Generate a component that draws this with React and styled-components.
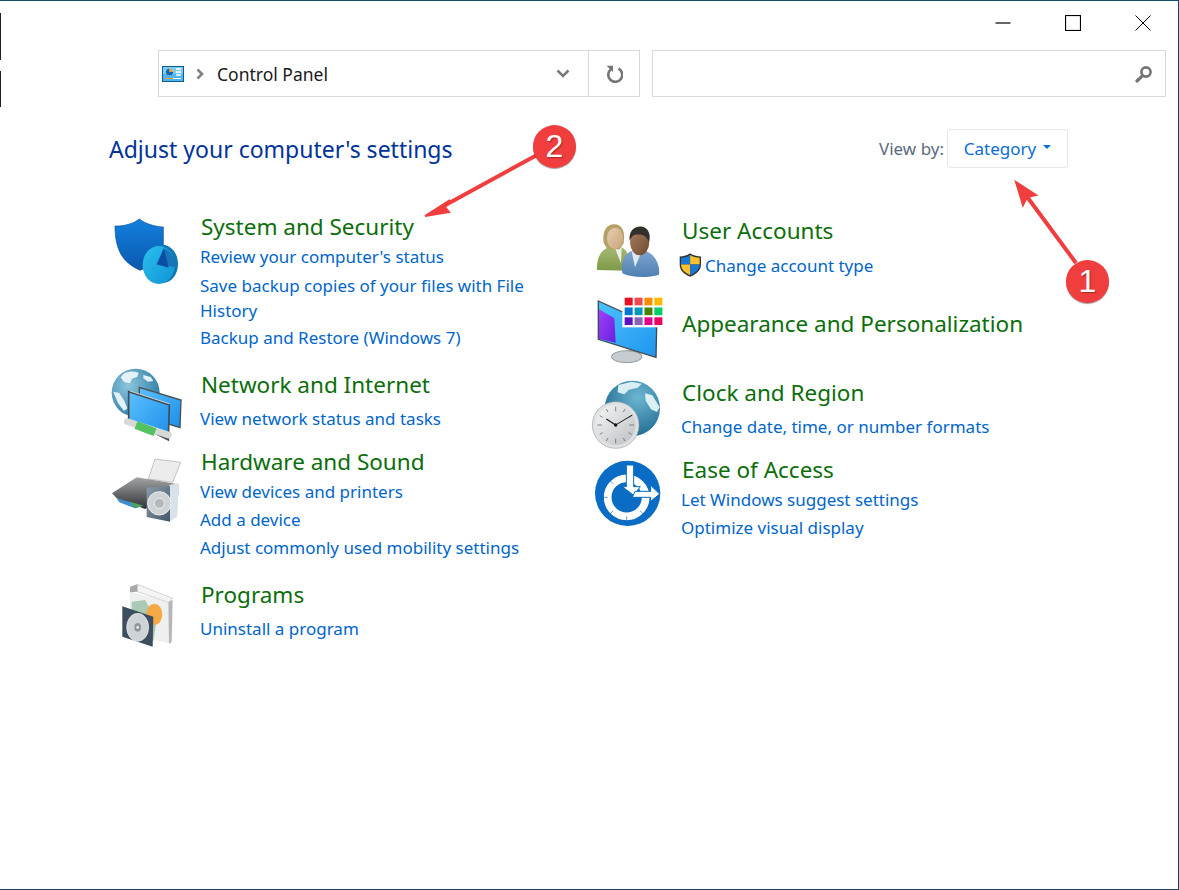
import React from 'react';
import styled, {createGlobalStyle} from 'styled-components';

const GlobalStyle = createGlobalStyle`
html, body {
  margin: 0;
  padding: 0;
  background: #fff;
}
body {
  font-family: "Noto Sans", "Open Sans", sans-serif;
}
`;

const Page = styled.div`
position: relative;
box-sizing: border-box;
width: 1179px;
height: 890px;
background: #fff;
border-top: 1px solid #14506e;
border-right: 1px solid #1a3f6b;
border-bottom: 1px solid #1a3f6b;
overflow: hidden;
`;

const EdgeMark = styled.div`
position: absolute;
left: 0;
top: ${({$top}) => $top}px;
width: 1px;
height: ${({$h}) => $h}px;
background: #222;
`;

const TitleBar = styled.div`
display: flex;
justify-content: flex-end;
height: 49px;
`;

const WinButton = styled.div`
display: flex;
align-items: center;
justify-content: center;
width: 70px;
height: 43px;
`;

const AddressRow = styled.div`
display: flex;
gap: 12px;
padding: 0 12px 0 158px;
`;

const AddressBox = styled.div`
box-sizing: border-box;
display: flex;
align-items: center;
width: 482px;
height: 47px;
border: 1px solid #d9d9d9;
`;

const Crumb = styled.div`
flex: 1;
display: flex;
align-items: center;
padding-left: 3px;
font-size: 17.5px;
color: #1a1a1a;
`;

const CrumbSep = styled.svg`
margin: 0 13px 0 12px;
`;

const DropZone = styled.div`
display: flex;
align-items: center;
justify-content: center;
width: 50px;
`;

const RefreshZone = styled.div`
display: flex;
align-items: center;
justify-content: center;
width: 50px;
height: 100%;
border-left: 1px solid #d9d9d9;
`;

const SearchBox = styled.div`
box-sizing: border-box;
flex: 1;
display: flex;
align-items: center;
justify-content: flex-end;
height: 47px;
padding-right: 12px;
border: 1px solid #d9d9d9;
`;

const HeaderRow = styled.div`
display: flex;
align-items: center;
justify-content: space-between;
height: 39px;
margin-top: 32px;
padding: 0 110px 0 109px;
`;

const PageTitle = styled.h1`
margin: 0;
font-size: 23px;
font-weight: 400;
color: #003399;
`;

const ViewBy = styled.div`
display: flex;
align-items: center;
gap: 3px;
font-size: 17px;
color: #5b6b7d;
`;

const ViewButton = styled.div`
box-sizing: border-box;
display: flex;
align-items: center;
justify-content: center;
gap: 7px;
width: 121px;
height: 39px;
border: 1px solid #e8e8e8;
border-radius: 3px;
color: #0a6dd9;
`;

const Caret = styled.span`
width: 0;
height: 0;
margin-top: -3px;
border-left: 4px solid transparent;
border-right: 4px solid transparent;
border-top: 4px solid #0a6dd9;
`;

const Columns = styled.div`
display: grid;
grid-template-columns: 481px 1fr;
margin-top: 44px;
padding-left: 109px;
`;

const Column = styled.div`
display: flex;
flex-direction: column;
padding-top: ${({$top}) => $top || 0}px;
`;

const Item = styled.div`
display: grid;
grid-template-columns: 92px 1fr;
margin-top: ${({$gap}) => $gap || 0}px;
`;

const IconArt = styled.svg`
display: block;
width: 76px;
height: 76px;
margin-top: ${({$top}) => $top || 0}px;
margin-bottom: -76px;
overflow: visible;
`;

const Heading = styled.div`
height: 30px;
margin-bottom: ${({$lone}) => ($lone ? 5 : 1)}px;
font-size: 22.5px;
line-height: 30px;
color: #0b6e0b;
white-space: nowrap;
`;

const TaskLink = styled.div`
margin-left: -1px;
max-width: ${({$wrapped}) => ($wrapped ? '330px' : 'none')};
padding: ${({$wrapped}) => ($wrapped ? '1.5px 0' : 0)};
font-size: 17px;
line-height: ${({$wrapped}) => ($wrapped ? 25 : 28)}px;
color: #0066cc;
`;

const ShieldRow = styled.div`
display: flex;
align-items: center;
gap: 3px;
margin-left: -3px;
height: 28px;
font-size: 17px;
color: #0066cc;
`;

const Badge = styled.div`
position: absolute;
left: ${({$x}) => $x}px;
top: ${({$y}) => $y}px;
display: flex;
align-items: center;
justify-content: center;
width: 43px;
height: 43px;
border-radius: 50%;
background: #f03e3e;
box-shadow: 0 1px 1px rgba(90, 60, 60, 0.55);
font-family: "Liberation Sans", Arial, sans-serif;
font-size: 32px;
color: #fff;
text-shadow: 1px 1px 1px rgba(90, 20, 20, 0.5);
`;

const ArrowLayer = styled.svg`
position: absolute;
left: 0;
top: -1px;
width: 1179px;
height: 890px;
pointer-events: none;
`;

const MiniPanelIcon = () => (
    <svg width="22" height="16" viewBox="0 0 22 16">
        <rect x="0.5" y="0.5" width="21" height="15" fill="#4fb3ee" stroke="#0d5c96"/>
        <rect x="1" y="1" width="20" height="7" fill="#7ccbf5"/>
        <circle cx="7.5" cy="6" r="3.6" fill="#fff"/>
        <path d="M7.5 6V2.4A3.6 3.6 0 0 1 11.1 6Z" fill="#f0a020"/>
        <path d="M7.5 6h3.6A3.6 3.6 0 1 1 7.5 2.4Z" fill="#1467b5"/>
        <path d="M14 3h5M14 6h5M14 9h5" stroke="#fff" strokeWidth="1.4"/>
        <path d="M3 12.5h8" stroke="#f0a020" strokeWidth="1"/>
        <path d="M11 12.5h8" stroke="#fff" strokeWidth="1"/>
    </svg>
);

const SmallShield = () => (
    <svg width="23" height="24" viewBox="283 123 66 71">
        <path d="M315 124c9 6 20 9 32 9v24c0 17-13 29-32 36-19-7-31-19-31-36v-24c12 0 22-3 31-9Z" fill="#333"/>
        <path d="M315 129v28h-27v-20c10 0 19-3 27-8Z" fill="#1878d4"/>
        <path d="M315 129c8 5 17 8 28 8v20h-28Z" fill="#fbc02d"/>
        <path d="M315 157v31c-15-6-27-16-27-31Z" fill="#fbc02d"/>
        <path d="M315 157h28c0 15-12 25-28 31Z" fill="#1878d4"/>
    </svg>
);

const SecurityIcon = () => (
    <IconArt viewBox="27 21 228 228">
        <defs>
            <linearGradient id="sh1" x1="0" y1="0" x2="0" y2="1">
                <stop offset="0" stopColor="#1280de"/>
                <stop offset="1" stopColor="#0a58ad"/>
            </linearGradient>
            <linearGradient id="pie1" x1="0" y1="0" x2="1" y2="1">
                <stop offset="0" stopColor="#2cc0ee"/>
                <stop offset="1" stopColor="#0f93d4"/>
            </linearGradient>
        </defs>
        <path d="M45 63C72 64 100 56 118 42C136 56 164 65 190 66V125C190 160 155 182 120 196C82 178 45 152 45 63Z" fill="url(#sh1)" stroke="#0a4f9c" strokeWidth="2"/>
        <ellipse cx="186" cy="177" rx="48" ry="58" fill="#0e78b6"/>
        <ellipse cx="176" cy="180" rx="48" ry="57" fill="url(#pie1)"/>
        <path d="M172 180L190 130C208 135 222 150 228 186Z" fill="#1774b6"/>
        <path d="M170 178L192 130L206 188Z" fill="#0a4fa6"/>
    </IconArt>
);

const NetworkIcon = () => (
    <IconArt $top={-5} viewBox="27 480 228 228">
        <defs>
            <radialGradient id="gl1" cx="0.35" cy="0.35" r="0.8">
                <stop offset="0" stopColor="#8cc6dd"/>
                <stop offset="1" stopColor="#22729e"/>
            </radialGradient>
            <linearGradient id="sc1" x1="0" y1="0" x2="1" y2="1">
                <stop offset="0" stopColor="#5cc0ff"/>
                <stop offset="1" stopColor="#1a8ee8"/>
            </linearGradient>
        </defs>
        <circle cx="107" cy="563" r="72" fill="url(#gl1)"/>
        <path d="M72 505c18-8 30-6 44-2l-4 12-16 6-6 14-18-4-10-14ZM130 510l22 6 8 12-16 2-14-10ZM40 560l18 4 14 22 10 24-10 8-18-24Z" fill="#e4f1f6"/>
        <path d="M118 547L243 585L240 668L118 630Z" fill="url(#sc1)" stroke="#4a4f55" strokeWidth="4"/>
        <path d="M86 560L208 600L205 705L86 645Z" fill="url(#sc1)" stroke="#474c52" strokeWidth="5"/>
        <path d="M90 558L208 596" stroke="#c8ccd0" strokeWidth="3"/>
        <path d="M82 650L205 690" stroke="#d6d9d6" strokeWidth="20" strokeLinecap="round"/>
        <path d="M108 660L165 682" stroke="#52c25e" strokeWidth="24"/>
    </IconArt>
);

const PrinterIcon = () => (
    <IconArt $top={3} viewBox="27 15 228 228">
        <defs>
            <linearGradient id="pr1" x1="0" y1="0" x2="0" y2="1">
                <stop offset="0" stopColor="#a2a4a6"/>
                <stop offset="1" stopColor="#2f3133"/>
            </linearGradient>
            <linearGradient id="pr2" x1="0" y1="0" x2="1" y2="1">
                <stop offset="0" stopColor="#8a9bab"/>
                <stop offset="1" stopColor="#465868"/>
            </linearGradient>
        </defs>
        <path d="M165 42L242 52L218 112L145 102Z" fill="#ececec" stroke="#a9a9a9" strokeWidth="2"/>
        <path d="M36 145L110 97L235 118L235 150L135 192L50 160Z" fill="url(#pr1)"/>
        <path d="M50 160L130 182L105 190L58 172Z" fill="#3a8fd0"/>
        <path d="M90 170L130 182L105 190Z" fill="#50a05a"/>
        <path d="M208 120L236 114L232 214L210 230Z" fill="#d8e2ea"/>
        <path d="M140 128L210 124L210 230L140 216Z" fill="url(#pr2)"/>
        <circle cx="178" cy="175" r="35" fill="#cfd3d6" stroke="#eef0f1" strokeWidth="3"/>
        <circle cx="178" cy="175" r="15" fill="#b4b8bb" stroke="#fff" strokeWidth="2"/>
    </IconArt>
);

const ProgramsIcon = () => (
    <IconArt viewBox="27 405 228 228">
        <path d="M90 440L205 470L210 595L90 570Z" fill="#eeefef"/>
        <path d="M205 470L218 465L215 590L207 597Z" fill="#b4b6b8"/>
        <path d="M112 418L218 460L205 472L112 440Z" fill="#f4f4f4" stroke="#c2c2c2" strokeWidth="2"/>
        <path d="M90 425L112 418L112 440L90 442Z" fill="#a8aaac"/>
        <path d="M95 470L135 465L170 525L160 590L95 500Z" fill="#abc9b4"/>
        <ellipse cx="163" cy="508" rx="24" ry="32" fill="#f4a944"/>
        <path d="M67 484L160 515L158 605L67 575Z" fill="#3c4d5e"/>
        <ellipse cx="113" cy="547" rx="33" ry="42" fill="#cfd3d6" stroke="#eef0f1" strokeWidth="2"/>
        <ellipse cx="113" cy="547" rx="10" ry="13" fill="#8d949a"/>
        <ellipse cx="113" cy="547" rx="4" ry="5" fill="#e7e9ea"/>
    </IconArt>
);

const UsersIcon = () => (
    <IconArt viewBox="15 18 228 228">
        <defs>
            <linearGradient id="us1" x1="0" y1="0" x2="0" y2="1">
                <stop offset="0" stopColor="#a7b872"/>
                <stop offset="1" stopColor="#7c9a48"/>
            </linearGradient>
            <linearGradient id="us2" x1="0" y1="0" x2="0" y2="1">
                <stop offset="0" stopColor="#7ea5cf"/>
                <stop offset="1" stopColor="#4f7fb2"/>
            </linearGradient>
            <linearGradient id="us3" x1="0" y1="0" x2="1" y2="1">
                <stop offset="0" stopColor="#e8ceae"/>
                <stop offset="1" stopColor="#c9a57e"/>
            </linearGradient>
            <linearGradient id="us4" x1="0" y1="0" x2="1" y2="1">
                <stop offset="0" stopColor="#a88062"/>
                <stop offset="1" stopColor="#6f4a30"/>
            </linearGradient>
        </defs>
        <path d="M36 180C34 140 50 118 72 112L110 112C130 122 138 150 130 182Z" fill="url(#us1)"/>
        <path d="M90 115L110 110L108 160Z" fill="#eef2ea"/>
        <path d="M56 100C50 60 68 42 88 43C110 44 122 60 116 100L104 118L68 118Z" fill="#b4a166"/>
        <ellipse cx="90" cy="85" rx="24" ry="32" fill="url(#us3)"/>
        <path d="M112 190C106 150 122 128 142 122L180 122C206 130 226 160 222 194C190 204 140 204 112 190Z" fill="url(#us2)"/>
        <path d="M140 124L170 124L150 172Z" fill="#dfe8ef"/>
        <ellipse cx="164" cy="96" rx="29" ry="40" fill="url(#us4)"/>
        <path d="M134 92C130 60 152 46 172 50C192 54 198 76 192 96C184 76 170 72 150 74C142 76 138 84 134 92Z" fill="#33302c"/>
    </IconArt>
);

const tiles = [
    '#e81123', '#f04a50', '#ff8c00', '#ffb900',
    '#0078d7', '#0099bc', '#498205', '#00cc6a',
    '#5c0fc7', '#8764b8', '#e3008c', '#ea005e',
];

const AppearanceIcon = () => (
    <IconArt $top={-17} viewBox="15 246 228 228">
        <defs>
            <linearGradient id="ap1" x1="0" y1="0" x2="1" y2="1">
                <stop offset="0" stopColor="#4cc2ff"/>
                <stop offset="1" stopColor="#1f95ee"/>
            </linearGradient>
            <linearGradient id="ap2" x1="0" y1="0" x2="1" y2="1">
                <stop offset="0" stopColor="#a040ff"/>
                <stop offset="1" stopColor="#6a1fd8"/>
            </linearGradient>
        </defs>
        <path d="M130 418L168 430L168 445L130 438Z" fill="#b8bec2"/>
        <ellipse cx="125" cy="440" rx="46" ry="18" fill="#c6ccd0" stroke="#6f767b" strokeWidth="2"/>
        <path d="M40 273L215 352L213 442L40 388Z" fill="url(#ap1)" stroke="#3e4a52" strokeWidth="4"/>
        <path d="M42 298L88 325L92 398L42 386Z" fill="url(#ap2)"/>
        <rect x="112" y="258" width="125" height="94" fill="#fff"/>
        {tiles.map((color, i) => (
            <rect key={color} x={119 + (i % 4) * 29.7} y={263 + Math.floor(i / 4) * 29.5} width="24" height="23" fill={color}/>
        ))}
    </IconArt>
);

const ClockIcon = () => (
    <IconArt viewBox="15 24 228 228">
        <defs>
            <radialGradient id="cl1" cx="0.6" cy="0.3" r="0.85">
                <stop offset="0" stopColor="#6db6d2"/>
                <stop offset="1" stopColor="#125d86"/>
            </radialGradient>
            <linearGradient id="cl2" x1="0" y1="0" x2="1" y2="1">
                <stop offset="0" stopColor="#f6f6f6"/>
                <stop offset="1" stopColor="#bcbfc2"/>
            </linearGradient>
        </defs>
        <circle cx="142" cy="115" r="83" fill="url(#cl1)"/>
        <path d="M100 45l40-10 30 6-12 12-26 6-14 14-20-6ZM180 70l22 6 22 36-8 14-18-8-16-26Z" fill="#d9eef5"/>
        <circle cx="92" cy="165" r="70" fill="#dfe2e4" stroke="#9ea4a8" strokeWidth="2"/>
        <circle cx="92" cy="165" r="60" fill="url(#cl2)"/>
        <path d="M92 110v14M92 206v14M37 165h14M133 165h14M64 117l5 9M120 117l-5 9M64 213l5-9M120 213l-5-9M44 137l9 5M140 137l-9 5M44 193l9-5M140 193l-9-5" stroke="#555" strokeWidth="2"/>
        <path d="M92 165L64 147" stroke="#1c1c1c" strokeWidth="4"/>
        <path d="M92 165L142 135" stroke="#1c1c1c" strokeWidth="3"/>
        <circle cx="92" cy="165" r="5" fill="#111"/>
    </IconArt>
);

const EaseIcon = () => (
    <IconArt $top={3} viewBox="15 264 228 228">
        <circle cx="128" cy="370" r="98" fill="#0a6cc4"/>
        <circle cx="125" cy="382" r="57" fill="none" stroke="#fff" strokeWidth="23"/>
        <path d="M125 325v-16M68 382h-24M85 342l-14-14M125 439v24M85 422l-16 16M165 422l16 16" stroke="#0a6cc4" strokeWidth="2"/>
        <path d="M124 285H146V350H166L146 376L112 350H124Z" fill="#fff" stroke="#0a6cc4" strokeWidth="3"/>
        <path d="M150 364H197V346L224 372L197 394V382H142Z" fill="#fff" stroke="#0a6cc4" strokeWidth="3"/>
    </IconArt>
);

function App() {
    return (
        <>
            <GlobalStyle/>
            <Page>
                <EdgeMark $top={12} $h={47}/>
                <EdgeMark $top={70} $h={36}/>
                <TitleBar>
                    <WinButton>
                        <svg width="16" height="16" viewBox="0 0 16 16"><path d="M0.5 8h15" stroke="#000" strokeWidth="1.2"/></svg>
                    </WinButton>
                    <WinButton>
                        <svg width="16" height="16" viewBox="0 0 16 16"><rect x="0.5" y="0.5" width="15" height="15" fill="none" stroke="#000" strokeWidth="1.2"/></svg>
                    </WinButton>
                    <WinButton>
                        <svg width="16" height="16" viewBox="0 0 16 16"><path d="M0.5 0.5l15 15M15.5 0.5l-15 15" stroke="#000" strokeWidth="1"/></svg>
                    </WinButton>
                </TitleBar>
                <AddressRow>
                    <AddressBox>
                        <Crumb>
                            <MiniPanelIcon/>
                            <CrumbSep width="8" height="12" viewBox="0 0 8 12">
                                <path d="M1.5 1.5L6 6L1.5 10.5" fill="none" stroke="#808080" strokeWidth="2.6"/>
                            </CrumbSep>
                            Control Panel
                        </Crumb>
                        <DropZone>
                            <svg width="14" height="9" viewBox="0 0 14 9">
                                <path d="M1.5 1.5L7 7L12.5 1.5" fill="none" stroke="#7a7a7a" strokeWidth="2.6"/>
                            </svg>
                        </DropZone>
                        <RefreshZone>
                            <svg width="18" height="18" viewBox="0 0 18 18">
                                <path d="M6 4.2A7 7 0 1 0 13.5 3.6" fill="none" stroke="#757575" strokeWidth="2.6"/>
                                <path d="M1.5 0.8H8V7Z" fill="#757575"/>
                            </svg>
                        </RefreshZone>
                    </AddressBox>
                    <SearchBox>
                        <svg width="18" height="18" viewBox="0 0 18 18">
                            <circle cx="11" cy="7" r="4.6" fill="none" stroke="#757575" strokeWidth="2.6"/>
                            <path d="M7.6 10.6L2 16" stroke="#757575" strokeWidth="3.2" strokeLinecap="round"/>
                        </svg>
                    </SearchBox>
                </AddressRow>
                <HeaderRow>
                    <PageTitle>Adjust your computer's settings</PageTitle>
                    <ViewBy>
                        View by:
                        <ViewButton>Category<Caret/></ViewButton>
                    </ViewBy>
                </HeaderRow>
                <Columns>
                    <Column>
                        <Item>
                            <SecurityIcon/>
                            <div>
                                <Heading>System and Security</Heading>
                                <TaskLink>Review your computer's status</TaskLink>
                                <TaskLink $wrapped>Save backup copies of your files with File History</TaskLink>
                                <TaskLink>Backup and Restore (Windows 7)</TaskLink>
                            </div>
                        </Item>
                        <Item $gap={18}>
                            <NetworkIcon/>
                            <div>
                                <Heading $lone>Network and Internet</Heading>
                                <TaskLink>View network status and tasks</TaskLink>
                            </div>
                        </Item>
                        <Item $gap={14}>
                            <PrinterIcon/>
                            <div>
                                <Heading>Hardware and Sound</Heading>
                                <TaskLink>View devices and printers</TaskLink>
                                <TaskLink>Add a device</TaskLink>
                                <TaskLink>Adjust commonly used mobility settings</TaskLink>
                            </div>
                        </Item>
                        <Item $gap={18}>
                            <ProgramsIcon/>
                            <div>
                                <Heading $lone>Programs</Heading>
                                <TaskLink>Uninstall a program</TaskLink>
                            </div>
                        </Item>
                    </Column>
                    <Column $top={4}>
                        <Item>
                            <UsersIcon/>
                            <div>
                                <Heading $lone>User Accounts</Heading>
                                <ShieldRow><SmallShield/>Change account type</ShieldRow>
                            </div>
                        </Item>
                        <Item $gap={30}>
                            <AppearanceIcon/>
                            <div>
                                <Heading>Appearance and Personalization</Heading>
                            </div>
                        </Item>
                        <Item $gap={38}>
                            <ClockIcon/>
                            <div>
                                <Heading $lone>Clock and Region</Heading>
                                <TaskLink>Change date, time, or number formats</TaskLink>
                            </div>
                        </Item>
                        <Item $gap={14}>
                            <EaseIcon/>
                            <div>
                                <Heading>Ease of Access</Heading>
                                <TaskLink>Let Windows suggest settings</TaskLink>
                                <TaskLink>Optimize visual display</TaskLink>
                            </div>
                        </Item>
                    </Column>
                </Columns>
                <ArrowLayer viewBox="0 0 1179 890">
                    <path d="M537 155L440 208" stroke="#f03e3e" strokeWidth="4"/>
                    <path d="M425 216L450 200L445 207L449 212Z" fill="#f03e3e" stroke="#f03e3e" strokeWidth="2"/>
                    <path d="M1076 263L1025 194" stroke="#f03e3e" strokeWidth="4"/>
                    <path d="M1016 182L1036 195L1027 197L1023 205Z" fill="#f03e3e" stroke="#f03e3e" strokeWidth="2"/>
                </ArrowLayer>
                <Badge $x={533} $y={124}>2</Badge>
                <Badge $x={1066} $y={259}>1</Badge>
            </Page>
        </>
    );
}

export default App;
